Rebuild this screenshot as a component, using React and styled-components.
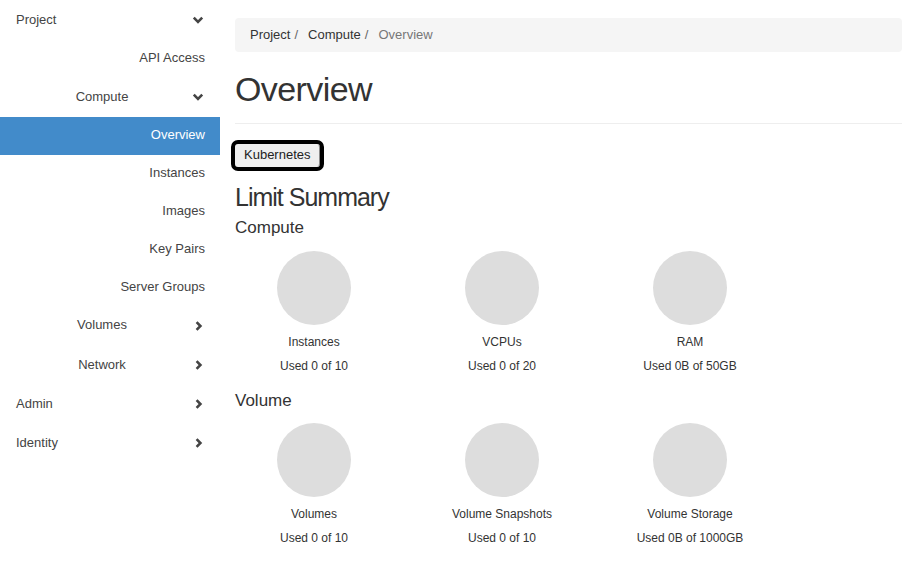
import React from 'react';
import styled, { createGlobalStyle } from 'styled-components';

const GlobalStyle = createGlobalStyle`
  html, body {
    margin: 0;
    padding: 0;
    background: #fff;
  }
  body {
    font-family: "Liberation Sans", Arial, sans-serif;
    font-size: 13px;
    line-height: 1.42857;
    color: #333;
  }
  * {
    box-sizing: border-box;
  }
`

const Layout = styled.div`
  display: flex;
  align-items: flex-start;
  width: 902px;
`

const Sidebar = styled.nav`
  width: 220px;
  flex: none;
  display: flex;
  flex-direction: column;
  padding-top: 0.5px;
`

const rowHeights = { group: 39, panel: 39.5, leaf: 37.8 };

const NavRow = styled.div`
  display: grid;
  grid-template-columns: 1fr;
  align-items: center;
  height: ${p => rowHeights[p.$kind]}px;
  padding: ${p => ({ group: '0 16px', panel: '0 16px 0 0', leaf: '0 15px 0 0' }[p.$kind])};
  color: ${p => (p.$active ? '#fff' : '#444')};
  background: ${p => (p.$active ? '#428bca' : 'transparent')};
  white-space: nowrap;

  & > * {
    grid-area: 1 / 1;
  }
`

const NavLabel = styled.span`
  justify-self: ${p => ({ group: 'start', panel: 'center', leaf: 'end' }[p.$kind])};
`

const Chevron = styled.svg`
  justify-self: end;
  width: 12px;
  height: 12px;
  display: block;
`

function ChevronIcon({ dir }) {
  return (
    <Chevron viewBox="0 0 12 12">
      {dir === 'down' ? (
        <polyline points="1.8,3.6 6,7.8 10.2,3.6" fill="none" stroke="#444" strokeWidth="2.6" />
      ) : (
        <polyline points="4.6,2.2 8.4,6 4.6,9.8" fill="none" stroke="#444" strokeWidth="2.6" />
      )}
    </Chevron>
  )
}

const Main = styled.main`
  flex: 1;
  min-width: 0;
  padding: 18px 0 0 15px;
`

const Breadcrumb = styled.ol`
  display: flex;
  list-style: none;
  margin: 0;
  padding: 8px 15px 7px;
  background: #f5f5f5;
  border-radius: 4px;
`

const Crumb = styled.li`
  color: ${p => (p.$current ? '#777' : '#333')};

  &:not(:last-child)::after {
    content: "/";
    color: #666;
    padding: 0 10px 0 4px;
  }
`

const PageHeader = styled.h1`
  margin: 19.5px 0 0;
  padding-bottom: 15px;
  border-bottom: 1px solid #eee;
  font-size: 34px;
  font-weight: 400;
  letter-spacing: -0.6px;
  line-height: 1.1;
  color: #333;
`

const ActionBar = styled.div`
  margin-top: 19.5px;
`

const TabButton = styled.button`
  font-family: "Liberation Sans", Arial, sans-serif;
  font-size: 13px;
  line-height: 15px;
  padding: 2px 8px 4px;
  color: #222;
  background: #efefef;
  border: 1px solid #efefef;
  border-right-color: #8a8a8a;
  border-radius: 3px;
  outline: 4px solid #000;
`

const SectionTitle = styled.h2`
  margin: 17.5px 0 0;
  font-size: 25px;
  font-weight: 400;
  letter-spacing: -1px;
  line-height: 1.1;
  color: #333;
`

const GroupTitle = styled.h3`
  margin: ${p => (p.$first ? '7.5px' : '13.5px')} 0 0;
  font-size: 17px;
  font-weight: 400;
  line-height: 1.1;
  color: #333;
`

const ChartRow = styled.div`
  display: grid;
  grid-template-columns: repeat(3, 188px);
  margin: ${p => (p.$tight ? '12.5px' : '13px')} 0 0 -15px;
`

const Chart = styled.div`
  display: flex;
  flex-direction: column;
  align-items: center;
  font-size: 12px;
  line-height: 24px;
  color: #333;
`

const Pie = styled.div`
  width: 74px;
  height: 74px;
  border-radius: 50%;
  background: #ddd;
  margin-bottom: 5px;
`

const nav = [
  { label: 'Project', kind: 'group', chevron: 'down' },
  { label: 'API Access', kind: 'leaf' },
  { label: 'Compute', kind: 'panel', chevron: 'down' },
  { label: 'Overview', kind: 'leaf', active: true },
  { label: 'Instances', kind: 'leaf' },
  { label: 'Images', kind: 'leaf' },
  { label: 'Key Pairs', kind: 'leaf' },
  { label: 'Server Groups', kind: 'leaf' },
  { label: 'Volumes', kind: 'panel', chevron: 'right' },
  { label: 'Network', kind: 'panel', chevron: 'right' },
  { label: 'Admin', kind: 'group', chevron: 'right' },
  { label: 'Identity', kind: 'group', chevron: 'right' },
];

const limits = [
  {
    title: 'Compute',
    charts: [
      { name: 'Instances', used: 'Used 0 of 10' },
      { name: 'VCPUs', used: 'Used 0 of 20' },
      { name: 'RAM', used: 'Used 0B of 50GB' },
    ],
  },
  {
    title: 'Volume',
    charts: [
      { name: 'Volumes', used: 'Used 0 of 10' },
      { name: 'Volume Snapshots', used: 'Used 0 of 10' },
      { name: 'Volume Storage', used: 'Used 0B of 1000GB' },
    ],
  },
];

function App() {
  return (
    <>
      <GlobalStyle />
      <Layout>
        <Sidebar>
          {nav.map((item, idx) => (
            <NavRow key={idx} $kind={item.kind} $active={item.active}>
              <NavLabel $kind={item.kind}>{item.label}</NavLabel>
              {item.chevron ? <ChevronIcon dir={item.chevron} /> : null}
            </NavRow>
          ))}
        </Sidebar>
        <Main>
          <Breadcrumb>
            <Crumb>Project</Crumb>
            <Crumb>Compute</Crumb>
            <Crumb $current>Overview</Crumb>
          </Breadcrumb>
          <PageHeader>Overview</PageHeader>
          <ActionBar>
            <TabButton>Kubernetes</TabButton>
          </ActionBar>
          <SectionTitle>Limit Summary</SectionTitle>
          {limits.map((group, gi) => (
            <div key={group.title}>
              <GroupTitle $first={gi === 0}>{group.title}</GroupTitle>
              <ChartRow $tight={gi > 0}>
                {group.charts.map(c => (
                  <Chart key={c.name}>
                    <Pie />
                    <span>{c.name}</span>
                    <span>{c.used}</span>
                  </Chart>
                ))}
              </ChartRow>
            </div>
          ))}
        </Main>
      </Layout>
    </>
  )
}

export default App;
